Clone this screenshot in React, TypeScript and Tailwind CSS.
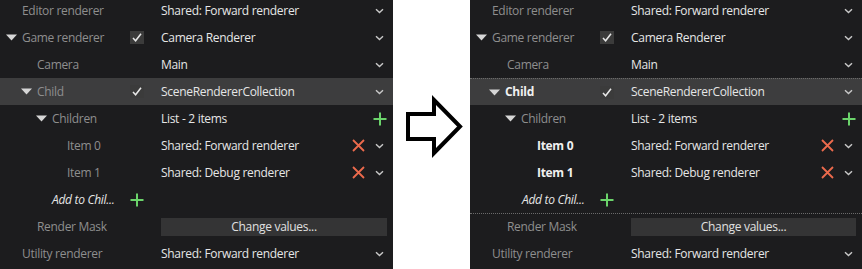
import React from "react";

type Row = {
  label: string;
  indent: number;
  tri?: boolean;
  bold?: boolean;
  italic?: boolean;
  check?: boolean;
  addPlus?: boolean;
  value?: string;
  button?: string;
  chevron?: boolean;
  x?: boolean;
  plus?: boolean;
  highlight?: boolean;
  dotted?: boolean;
};

const Chevron = () => (
  <svg width="9" height="6" viewBox="0 0 9 6" className="block">
    <path d="M1 1.2 L4.5 4.6 L8 1.2" fill="none" stroke="#c8c8c8" strokeWidth="1.4" />
  </svg>
);

const Plus = () => (
  <svg width="14" height="14" viewBox="0 0 14 14" className="block">
    <path d="M7 0.5 V13.5 M0.5 7 H13.5" stroke="#6bd36b" strokeWidth="2" />
  </svg>
);

const XIcon = () => (
  <svg width="13" height="13" viewBox="0 0 13 13" className="block">
    <path d="M1 1 L12 12 M12 1 L1 12" stroke="#ec6a4c" strokeWidth="1.8" />
  </svg>
);

const Tri = () => (
  <svg width="11" height="7" viewBox="0 0 11 7" className="block">
    <path d="M0 0.5 H11 L5.5 6.5 Z" fill="#d6d6d6" />
  </svg>
);

const Check = () => (
  <div className="w-[14px] h-[13px] bg-[#3b3b3b] flex items-center justify-center">
    <svg width="10" height="9" viewBox="0 0 10 9" className="block">
      <path d="M1 5 L3.6 7.8 L9 0.8" fill="none" stroke="#e8e8e8" strokeWidth="1.5" />
    </svg>
  </div>
);

function Panel({ rows, width }: { rows: Row[]; width: string }) {
  return (
    <div className={`${width} h-[269px] overflow-hidden bg-[#1c1c1e] shrink-0`}>
      <div className="-mt-[3px] flex flex-col">
        {rows.map((r, i) => (
          <div
            key={i}
            className={`h-[27px] flex items-center ${r.highlight ? "bg-[#3d3d3e]" : ""} ${
              r.dotted ? "border-t border-dotted border-[#6a6a6a]" : ""
            }`}
          >
            <div className="w-[130px] shrink-0 flex items-center" style={{ paddingLeft: r.tri ? r.indent - 16 : r.indent }}>
              {r.tri && (
                <div className="w-[16px] shrink-0">
                  <Tri />
                </div>
              )}
              <span
                className={`whitespace-nowrap ${
                  r.bold
                    ? "font-bold text-[#f0f0f0]"
                    : r.italic
                    ? "italic text-[#e6e6e6]"
                    : "text-[#8e8e8e]"
                }`}
              >
                {r.label}
              </span>
            </div>
            <div className="w-[31px] shrink-0 flex items-center">
              {r.check && <Check />}
              {r.addPlus && <Plus />}
            </div>
            <div className="flex-1 flex items-center pr-[6px] min-w-0">
              {r.button ? (
                <div className="flex-1 h-[18px] bg-[#343435] text-[#e0e0e0] flex items-center justify-center">
                  {r.button}
                </div>
              ) : (
                <>
                  <span className="flex-1 text-[#e6e6e6] whitespace-nowrap">{r.value}</span>
                  {r.x && (
                    <div className="mr-[7px]">
                      <XIcon />
                    </div>
                  )}
                  {r.chevron && (
                    <div className="w-[15px] flex justify-center">
                      <Chevron />
                    </div>
                  )}
                  {r.plus && (
                    <div className="w-[15px] flex justify-end">
                      <Plus />
                    </div>
                  )}
                </>
              )}
            </div>
          </div>
        ))}
      </div>
    </div>
  );
}

const base = (right: boolean): Row[] => [
  { label: "Editor renderer", indent: 22, value: "Shared: Forward renderer", chevron: true },
  { label: "Game renderer", indent: 22, tri: true, check: true, value: "Camera Renderer", chevron: true },
  { label: "Camera", indent: 37, value: "Main", chevron: true },
  {
    label: "Child",
    indent: right ? 35 : 37,
    tri: true,
    bold: right,
    check: true,
    value: "SceneRendererCollection",
    chevron: true,
    highlight: true,
    dotted: right,
  },
  { label: "Children", indent: right ? 51 : 52, tri: true, value: "List - 2 items", plus: true },
  { label: "Item 0", indent: 67, bold: right, value: "Shared: Forward renderer", x: true, chevron: true },
  { label: "Item 1", indent: 67, bold: right, value: "Shared: Debug renderer", x: true, chevron: true },
  { label: "Add to Chil...", indent: 52, italic: true, addPlus: true },
  { label: "Render Mask", indent: 37, button: "Change values...", dotted: right },
  { label: "Utility renderer", indent: 22, value: "Shared: Forward renderer", chevron: true },
];

export default function App() {
  return (
    <div
      className="w-[862px] h-[269px] flex bg-white text-[12px] tracking-[-0.3px] overflow-hidden"
      style={{ fontFamily: '"Open Sans", "Noto Sans", sans-serif' }}
    >
      <Panel rows={base(false)} width="w-[393px]" />
      <div className="w-[77px] shrink-0 h-[269px] bg-white">
        <svg width="77" height="269" viewBox="0 0 77 269" className="block">
          <polygon
            points="15,114 41,114 41,100 67,126.5 41,153 41,139 15,139"
            fill="white"
            stroke="black"
            strokeWidth="4"
            strokeLinejoin="miter"
          />
        </svg>
      </div>
      <Panel rows={base(true)} width="w-[392px]" />
    </div>
  );
}
